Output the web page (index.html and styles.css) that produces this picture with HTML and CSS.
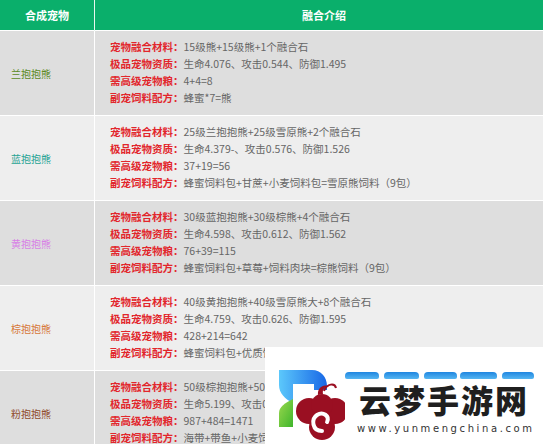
FILE: index.html
```html
<!DOCTYPE html>
<html lang="zh">
<head>
<meta charset="utf-8">
<title>抱抱熊融合</title>
<link rel="stylesheet" href="styles.css">
</head>
<body>
<div class="page">
<table class="pets">
  <thead>
    <tr><th class="c1">合成宠物</th><th class="c2">融合介绍</th></tr>
  </thead>
  <tbody>
    <tr class="odd">
      <td class="name n1">兰抱抱熊</td>
      <td class="info">
        <p><b>宠物融合材料：</b>15级熊+15级熊+1个融合石</p>
        <p><b>极品宠物资质：</b>生命4.076、攻击0.544、防御1.495</p>
        <p><b>需高级宠物粮：</b>4+4=8</p>
        <p><b>副宠饲料配方：</b>蜂蜜*7=熊</p>
      </td>
    </tr>
    <tr class="even">
      <td class="name n2">蓝抱抱熊</td>
      <td class="info">
        <p><b>宠物融合材料：</b>25级兰抱抱熊+25级雪原熊+2个融合石</p>
        <p><b>极品宠物资质：</b>生命4.379-、攻击0.576、防御1.526</p>
        <p><b>需高级宠物粮：</b>37+19=56</p>
        <p><b>副宠饲料配方：</b>蜂蜜饲料包+甘蔗+小麦饲料包=雪原熊饲料（9包）</p>
      </td>
    </tr>
    <tr class="odd">
      <td class="name n3">黄抱抱熊</td>
      <td class="info">
        <p><b>宠物融合材料：</b>30级蓝抱抱熊+30级棕熊+4个融合石</p>
        <p><b>极品宠物资质：</b>生命4.598、攻击0.612、防御1.562</p>
        <p><b>需高级宠物粮：</b>76+39=115</p>
        <p><b>副宠饲料配方：</b>蜂蜜饲料包+草莓+饲料肉块=棕熊饲料（9包）</p>
      </td>
    </tr>
    <tr class="even">
      <td class="name n4">棕抱抱熊</td>
      <td class="info">
        <p><b>宠物融合材料：</b>40级黄抱抱熊+40级雪原熊大+8个融合石</p>
        <p><b>极品宠物资质：</b>生命4.759、攻击0.626、防御1.595</p>
        <p><b>需高级宠物粮：</b>428+214=642</p>
        <p><b>副宠饲料配方：</b>蜂蜜饲料包+优质饲料肉块=雪原熊大饲料（12包）</p>
      </td>
    </tr>
    <tr class="odd">
      <td class="name n5">粉抱抱熊</td>
      <td class="info">
        <p><b>宠物融合材料：</b>50级棕抱抱熊+50级雪原熊大+16个融合石</p>
        <p><b>极品宠物资质：</b>生命5.199、攻击0.658、防御1.640</p>
        <p><b>需高级宠物粮：</b>987+484=1471</p>
        <p><b>副宠饲料配方：</b>海带+带鱼+小麦饲料包=粉熊饲料（16包）</p>
      </td>
    </tr>
  </tbody>
</table>

<div class="watermark">
  <svg class="wm-logo" viewBox="0 0 80 97" width="80" height="97">
    <defs>
      <linearGradient id="gb" x1="0" y1="0" x2="1" y2="0">
        <stop offset="0" stop-color="#5cc8fb"/>
        <stop offset="1" stop-color="#1867e6"/>
      </linearGradient>
      <linearGradient id="gg" x1="0" y1="0" x2="1" y2="1">
        <stop offset="0" stop-color="#9bd84e"/>
        <stop offset="1" stop-color="#3fb52c"/>
      </linearGradient>
    </defs>
    <path d="M14,23 L47,23 C56,23 62,30 62,39 L62,43 L49,43 L49,37 L28,37 L28,56 C20,52 14,46 14,38 Z" fill="url(#gb)"/>
    <path d="M14,80 L14,66 C14,60 20,56 28,52 L28,80 Z" fill="url(#gg)"/>
    <g fill="#9a0f22">
      <circle cx="44" cy="64" r="13"/>
      <circle cx="70" cy="64" r="13"/>
      <circle cx="57" cy="80" r="13"/>
      <circle cx="57" cy="58" r="11"/>
    </g>
    <path d="M57,84 C47,84 46,72 52,68 C58,64 65,69 62,75" fill="none" stroke="#fff" stroke-width="4" stroke-linecap="round"/>
    <circle cx="57" cy="74" r="3.2" fill="#9a0f22"/>
    <path d="M53,48 C52,40 60,36 64,40 C60,39 57,42 58,47 Z" fill="#9a0f22"/>
    <path d="M59,44 C62,36 70,36 71,41" fill="none" stroke="#9a0f22" stroke-width="2"/>
  </svg>
  <div class="wm-text">
    <div class="wm-bars"><span class="b1"></span><span class="b2"></span><span class="b3"></span><span class="b4"></span><span class="b5"></span></div>
    <div class="wm-title">云梦手游网</div>
    <div class="wm-url">www.yunmengchina.com</div>
  </div>
</div>
</div>
</body>
</html>
```

FILE: styles.css
```css
html, body {
  margin: 0;
  padding: 0;
  background: #ffffff;
}
body {
  font-family: "Noto Sans CJK SC", "Microsoft YaHei", sans-serif;
  overflow: hidden;
}
.page {
  position: relative;
  width: 543px;
  height: 444px;
  overflow: hidden;
}
.pets {
  width: 543px;
  border-collapse: collapse;
  table-layout: fixed;
}
.pets th {
  height: 30px;
  padding: 0;
  background: #0aaf6b;
  color: #ffffff;
  font-size: 11px;
  font-weight: bold;
  text-align: center;
  vertical-align: middle;
}
.pets th.c1 {
  width: 94px;
  border-right: 1px solid #e8f7ef;
}
.pets th.c2 {
  padding-left: 10px;
}
.pets td {
  border-top: 1px solid #ffffff;
  padding: 0;
}
.pets td.name {
  border-right: 1px solid #ffffff;
  padding-left: 11px;
  font-size: 10px;
  vertical-align: middle;
  text-align: left;
}
.odd td { background: #dedede; }
.even td { background: #eeeeee; }
.n1 { color: #5b8a1f; }
.n2 { color: #27a394; }
.n3 { color: #d87fe6; }
.n4 { color: #d6773a; }
.n5 { color: #8f4a2c; }
.pets td.info {
  padding: 7px 0 9px 15px;
  font-size: 10.5px;
  line-height: 17px;
  color: #666666;
  white-space: nowrap;
}
.info p {
  margin: 0;
}
.info b {
  color: #e2262c;
  font-weight: bold;
}
.watermark {
  position: absolute;
  left: 265px;
  top: 347px;
  width: 278px;
  height: 97px;
  background: #ffffff;
  display: flex;
}
.wm-logo {
  flex: 0 0 80px;
  display: block;
}
.wm-text {
  display: flex;
  flex-direction: column;
  padding-top: 25px;
}
.wm-bars {
  display: flex;
  height: 8px;
}
.wm-bars span {
  height: 7px;
  border-radius: 4px 4px 2px 2px;
  background: linear-gradient(#1f86e0, #56b6f2);
}
.wm-bars .b1 { width: 34px; }
.wm-bars .b2 { width: 35px; margin-left: 5px; }
.wm-bars .b3 { width: 33px; margin-left: 5px; }
.wm-bars .b4 { width: 37px; margin-left: 3px; }
.wm-bars .b5 { width: 32px; margin-left: 5px; }
.wm-title {
  margin-top: 2px;
  padding-left: 14px;
  font-size: 32px;
  line-height: 34px;
  font-weight: 900;
  color: #1f1f1f;
  letter-spacing: 2px;
}
.wm-url {
  margin-top: 7px;
  padding-left: 12px;
  font-family: "DejaVu Sans", sans-serif;
  font-size: 10px;
  line-height: 11px;
  letter-spacing: 2.6px;
  color: #333333;
}
```
